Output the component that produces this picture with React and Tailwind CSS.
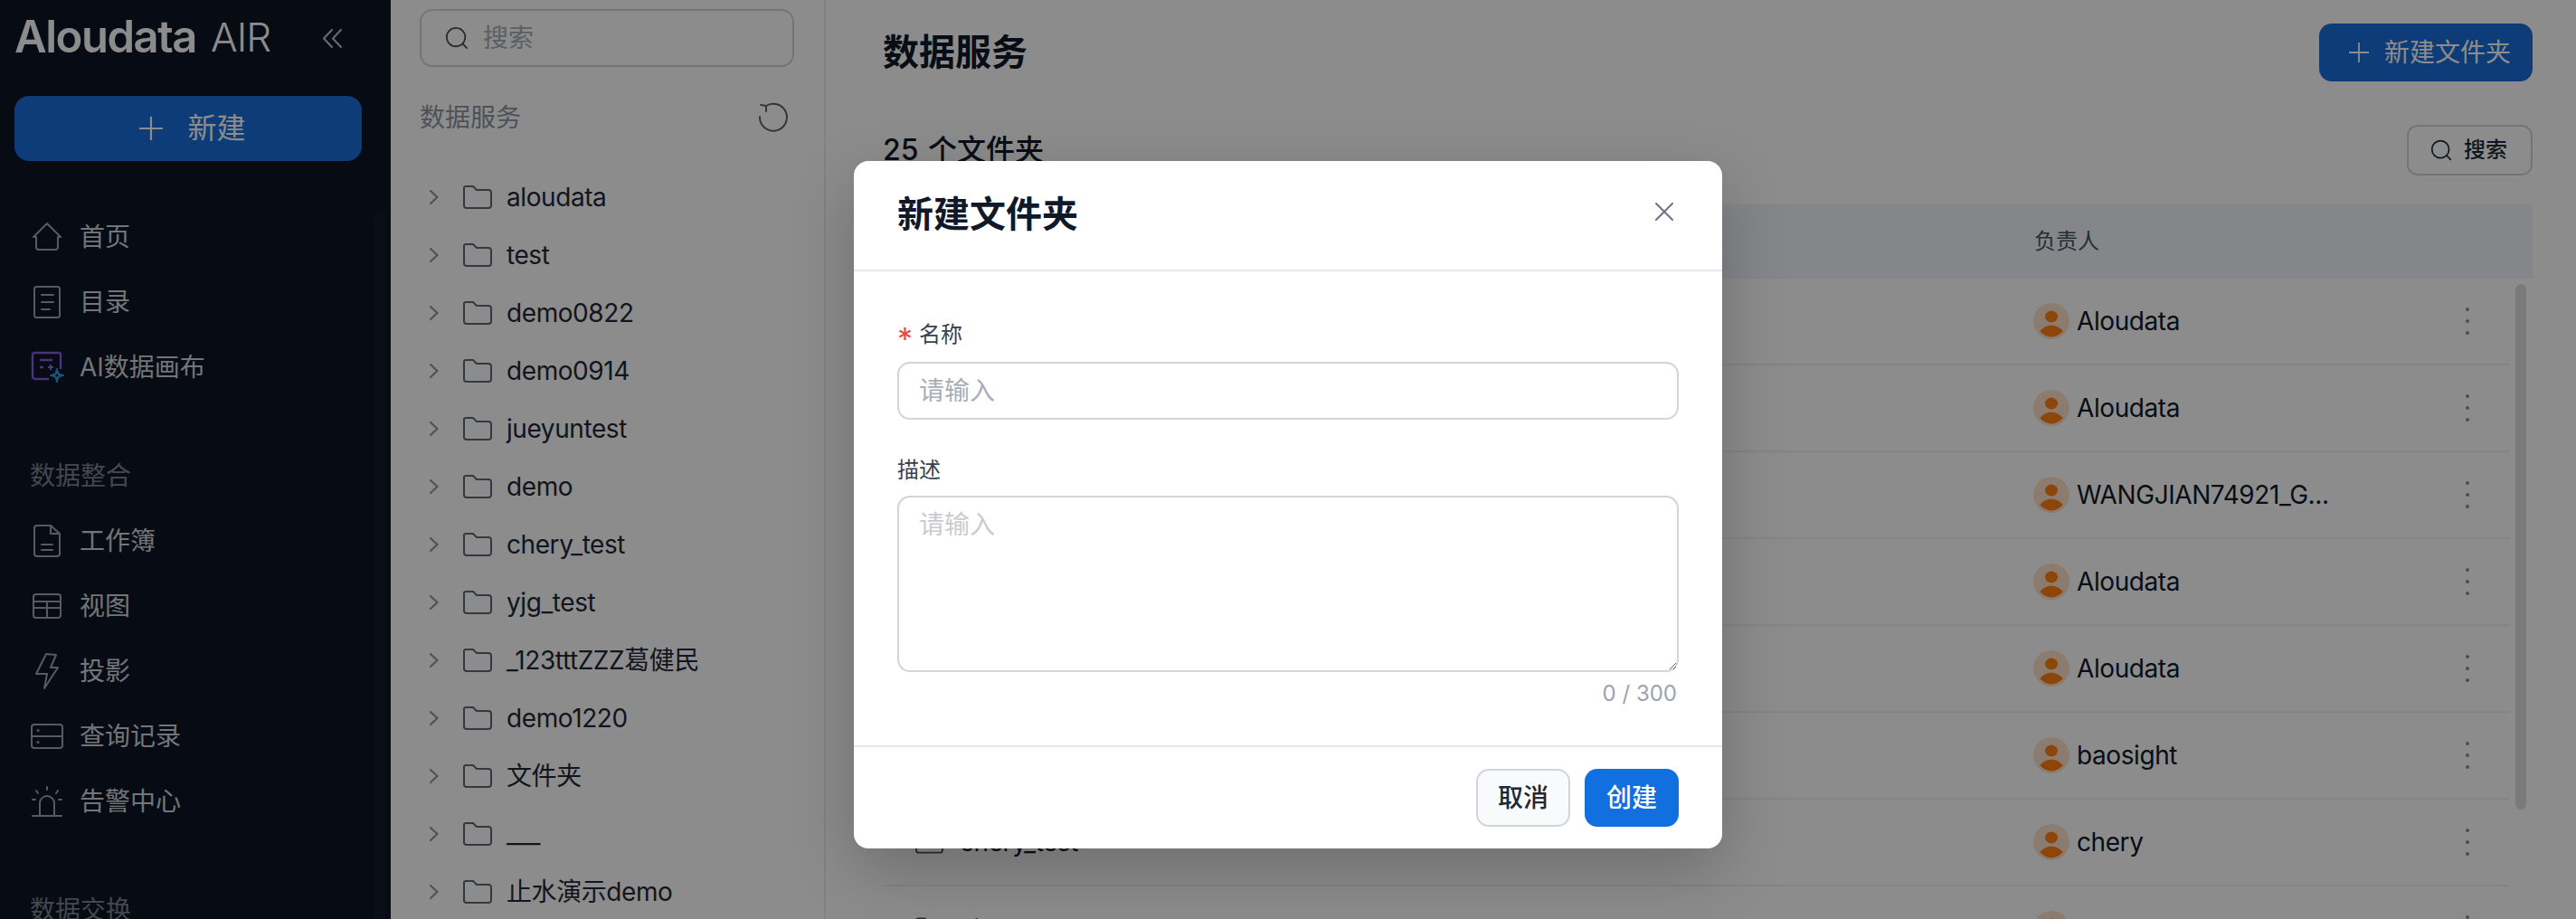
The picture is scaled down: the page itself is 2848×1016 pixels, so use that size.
import React from "react";

const Svg = ({ w, h, vb, children, className = "" }) => (
  <svg width={w} height={h} viewBox={vb || `0 0 ${w} ${h}`} fill="none" stroke="currentColor" strokeWidth="2" strokeLinecap="round" strokeLinejoin="round" className={"shrink-0 " + className}>
    {children}
  </svg>
);

const HomeIcon = () => (
  <Svg w={34} h={34}>
    <path d="M17 2 L32 17 H29 V28 a3 3 0 0 1 -3 3 H8 a3 3 0 0 1 -3 -3 V17 H2 Z" />
  </Svg>
);
const DirIcon = () => (
  <Svg w={32} h={38}>
    <rect x="2" y="2" width="28" height="34" rx="2.5" />
    <path d="M10 11 H23 M10 19 H23 M10 27 H19" />
  </Svg>
);
const AiIcon = () => (
  <svg width="38" height="36" viewBox="0 0 38 36" fill="none" className="shrink-0 translate-x-[1px]">
    <path d="M20 31 H5 a3 3 0 0 1 -3 -3 V4 a2 2 0 0 1 2 -2 H31 a2 2 0 0 1 2 2 V20" stroke="#8a5ce6" strokeWidth="2.4" />
    <path d="M10 10 H24 M10 18 H14" stroke="#8a5ce6" strokeWidth="2.4" />
    <path d="M19 18 H25 M22 15 V21" stroke="#7a70e0" strokeWidth="2" />
    <path d="M29 19 L31 25 L37 27 L31 29 L29 35 L27 29 L21 27 L27 25 Z" fill="#3198e6" stroke="#3198e6" strokeWidth="1" />
    <circle cx="29" cy="27" r="1.6" fill="#0e1625" />
  </svg>
);
const BookIcon = () => (
  <Svg w={32} h={38}>
    <path d="M5 2 H20 L30 11 V33 a3 3 0 0 1 -3 3 H5 a3 3 0 0 1 -3 -3 V5 a3 3 0 0 1 3 -3 Z" />
    <path d="M20 2 V11 H30 M10 23 H22 M10 29 H22" />
  </Svg>
);
const TableIcon = () => (
  <Svg w={34} h={30}>
    <rect x="2" y="2" width="30" height="26" rx="3" />
    <path d="M2 10 H32 M17 10 V28 M2 17 H32" />
  </Svg>
);
const BoltIcon = () => (
  <Svg w={28} h={42}>
    <path d="M13 2 L24 3 L18 17 L26 17 L11 40 L14 24 L2 24 Z" />
  </Svg>
);
const QueryIcon = () => (
  <Svg w={38} h={30}>
    <rect x="2" y="2" width="34" height="26" rx="3" />
    <path d="M2 15 H36" />
    <circle cx="9" cy="8.5" r="0.6" />
    <circle cx="9" cy="21.5" r="0.6" />
  </Svg>
);
const AlarmIcon = () => (
  <Svg w={36} h={36}>
    <path d="M2 34 H34 M10 34 V20 a8 8 0 0 1 16 0 V34" />
    <path d="M18 2 V5 M6 6 L8 9 M30 6 L28 9 M2 16 H5 M31 16 H34" />
  </Svg>
);
const SearchIcon = ({ s = 28 }) => (
  <svg width={s} height={s} viewBox="0 0 28 28" fill="none" stroke="currentColor" strokeWidth="2" strokeLinecap="round" className="shrink-0">
    <circle cx="13" cy="13" r="11" />
    <path d="M21 21 L26 26" />
  </svg>
);
const FolderIcon = ({ w = 32, h = 26 }) => (
  <svg width={w} height={h} viewBox="0 0 32 26" fill="none" stroke="currentColor" strokeWidth="2" strokeLinejoin="round" className="shrink-0">
    <path d="M1 3 a2 2 0 0 1 2 -2 H11 L15 5 H28 a3 3 0 0 1 3 3 V22 a3 3 0 0 1 -3 3 H4 a3 3 0 0 1 -3 -3 Z" />
  </svg>
);
const PlusIcon = ({ s }) => (
  <svg width={s} height={s} viewBox="0 0 24 24" fill="none" stroke="currentColor" strokeWidth="2" className="shrink-0">
    <path d="M12 0 V24 M0 12 H24" />
  </svg>
);
const Avatar = () => (
  <svg width="40" height="40" viewBox="0 0 40 40" className="shrink-0">
    <circle cx="20" cy="20" r="20" fill="#ffe2cc" />
    <ellipse cx="20" cy="15" rx="7" ry="6.5" fill="#ff8012" />
    <path d="M7 31 Q20 18 33 31 Q20 44 7 31 Z" fill="#ff8012" />
  </svg>
);
const Kebab = () => (
  <div className="w-[56px] flex flex-col items-center gap-[9px]">
    <span className="w-[4px] h-[4px] rounded-full bg-[#8a8f99]" />
    <span className="w-[4px] h-[4px] rounded-full bg-[#8a8f99]" />
    <span className="w-[4px] h-[4px] rounded-full bg-[#8a8f99]" />
  </div>
);

const NavItem = ({ icon, label }) => (
  <div className="h-[72px] flex items-center text-[28px] text-[#d1d5db]">
    <span className="w-[72px] flex justify-center text-[#a0a4ac] shrink-0">{icon}</span>
    <span>{label}</span>
  </div>
);

const SectionLabel = ({ children }) => (
  <div className="h-[72px] mt-[48px] pl-[17px] flex items-center text-[28px] text-[#7c818c]">{children}</div>
);

const Sidebar = () => (
  <aside className="relative w-[432px] shrink-0 bg-[#0e1625] pl-[16px] pr-[32px] overflow-hidden">
    <div className="h-[106px] flex items-start pt-[14px] text-white whitespace-nowrap">
      <span className="text-[49px] leading-[54px] font-semibold tracking-[-0.03em]">Aloudata</span>
      <span className="text-[44px] leading-[54px] font-light ml-[16px] tracking-[-0.02em]">AIR</span>
      <span className="ml-auto mr-[22px] mt-[18px] text-[#c0c4cc]">
        <Svg w={21} h={21} vb="0 0 21 21"><path d="M10 1 L1 10.5 L10 20 M20 1 L11 10.5 L20 20" /></Svg>
      </span>
    </div>
    <div className="h-[72px] rounded-[16px] bg-[#186dda] flex items-center justify-center gap-[27px] pl-[10px] text-white text-[32px]">
      <PlusIcon s={26} />
      <span>新建</span>
    </div>
    <div className="mt-[48px]">
      <NavItem icon={<HomeIcon />} label="首页" />
      <NavItem icon={<DirIcon />} label="目录" />
      <NavItem icon={<AiIcon />} label="AI数据画布" />
    </div>
    <SectionLabel>数据整合</SectionLabel>
    <NavItem icon={<BookIcon />} label="工作簿" />
    <NavItem icon={<TableIcon />} label="视图" />
    <NavItem icon={<BoltIcon />} label="投影" />
    <NavItem icon={<QueryIcon />} label="查询记录" />
    <NavItem icon={<AlarmIcon />} label="告警中心" />
    <SectionLabel>数据交换</SectionLabel>
    <div className="absolute right-[6px] top-[235px] bottom-0 w-[12px] bg-[#111a2a]" />
  </aside>
);

const treeItems = ["aloudata", "test", "demo0822", "demo0914", "jueyuntest", "demo", "chery_test", "yjg_test", "_123tttZZZ葛健民", "demo1220", "文件夹", "___", "止水演示demo"];

const Tree = () => (
  <section className="w-[481px] shrink-0 border-r-2 border-[#ededed] bg-white px-[32px] pt-[10px] overflow-hidden">
    <div className="h-[64px] w-[414px] rounded-[14px] border-2 border-[#d1d5db] flex items-center pl-[26px] gap-[16px] text-[28px] text-[#a8adb6]">
      <span className="text-[#4b5563]"><SearchIcon s={26} /></span>
      <span>搜索</span>
    </div>
    <div className="h-[64px] mt-[24px] flex items-center justify-between text-[28px] text-[#8f95a0] pr-[7px]">
      <span>数据服务</span>
      <span className="text-[#5b6472]">
        <Svg w={34} h={34}>
          <path d="M9 4 A15 15 0 1 1 2 16" />
          <path d="M3 3 L9 4 L9 10" />
        </Svg>
      </span>
    </div>
    <div className="mt-[24px]">
      {treeItems.map((name) => (
        <div key={name} className="h-[64px] flex items-center text-[28px] text-[#1f2937] whitespace-pre">
          <span className="w-[32px] flex justify-center text-[#8a909b]">
            <Svg w={10} h={16} vb="0 0 10 16"><path d="M1 1 L8.5 8 L1 15" /></Svg>
          </span>
          <span className="ml-[16px] mr-[16px] text-[#5f6776]"><FolderIcon /></span>
          <span className="tracking-[-0.015em]">{name}</span>
        </div>
      ))}
    </div>
  </section>
);

const rows = [
  ["aloudata", "Aloudata"],
  ["test", "Aloudata"],
  ["demo0822", "WANGJIAN74921_G..."],
  ["demo0914", "Aloudata"],
  ["jueyuntest", "Aloudata"],
  ["demo", "baosight"],
  ["chery_test", "chery"],
  ["yjg_test", "Aloudata"],
];

const Main = () => (
  <main className="flex-1 min-w-0 bg-white pl-[63px] pr-[48px] pt-[26px]">
    <div className="h-[64px] flex items-center justify-between">
      <h1 className="text-[40px] font-semibold text-[#111827]">数据服务</h1>
      <div className="w-[236px] h-[64px] rounded-[14px] bg-[#186dda] flex items-center pl-[33px] gap-[17px] text-[28px] text-white">
        <PlusIcon s={22} />
        <span>新建文件夹</span>
      </div>
    </div>
    <div className="h-[56px] mt-[48px] flex items-center justify-between">
      <span className="text-[32px] font-medium text-[#111827] [word-spacing:2px]">25 个文件夹</span>
      <div className="w-[139px] h-[56px] rounded-[12px] border-2 border-[#d1d5db] flex items-center pl-[24px] gap-[13px] text-[24px] font-medium text-[#1f2937]">
        <SearchIcon s={24} />
        <span>搜索</span>
      </div>
    </div>
    <div className="h-[82px] mt-[32px] bg-[#f2f5f9] flex items-center text-[24px] text-[#4b5563] pl-[1273px]">负责人</div>
    <div className="relative pr-[25px]">
      {rows.map(([name, owner]) => (
        <div key={name} className="h-[96px] border-b-2 border-[#f1f1f1] flex items-center text-[28px] text-[#111827]">
          <div className="flex-1 min-w-0 pl-[36px] flex items-center gap-[18px]">
            <span className="text-[#4b5563]"><FolderIcon w={31} h={28} /></span>
            <span className="tracking-[-0.015em]">{name}</span>
          </div>
          <div className="w-[452px] flex items-center gap-[8px]">
            <Avatar />
            <span className="tracking-[-0.015em]">{owner}</span>
          </div>
          <Kebab />
          <div className="w-[19px]" />
        </div>
      ))}
      <div className="absolute right-[7px] top-[6px] w-[12px] h-[581px] rounded-full bg-[#dfdfdf]" />
    </div>
  </main>
);

const Modal = () => (
  <div className="absolute left-[944px] top-[178px] w-[960px] h-[760px] bg-white rounded-[16px] shadow-[0_24px_70px_rgba(0,0,0,0.22)] flex flex-col">
    <div className="h-[122px] shrink-0 border-b-2 border-[#e5e7eb] pl-[48px] pr-[53px] flex items-center justify-between pb-[2px]">
      <h2 className="text-[40px] font-semibold text-[#111827]">新建文件夹</h2>
      <span className="text-[#6b7280] -mt-[6px]">
        <Svg w={22} h={22}><path d="M2 2 L20 20 M20 2 L2 20" /></Svg>
      </span>
    </div>
    <div className="flex-1 px-[48px] pt-[48px]">
      <div className="h-[44px] flex items-center text-[24px] text-[#374151]">
        <span className="text-[#f04848] w-[24px] text-[34px] leading-none pt-[10px]">*</span>
        <span>名称</span>
      </div>
      <input placeholder="请输入" className="mt-[8px] block w-full h-[64px] rounded-[14px] border-2 border-[#d1d5db] px-[22px] text-[28px] outline-none placeholder:text-[#a8adb8]" />
      <div className="h-[44px] mt-[34px] flex items-center text-[24px] text-[#374151]">描述</div>
      <textarea placeholder="请输入" className="mt-[6px] block w-full h-[195px] rounded-[14px] border-2 border-[#d1d5db] px-[22px] py-[8px] text-[28px] leading-[44px] outline-none resize-y placeholder:text-[#c9cbcf]" />
      <div className="h-[36px] mt-[6px] flex items-center justify-end pr-[2px] text-[24px] text-[#9ca3af]">0 / 300</div>
    </div>
    <div className="h-[114px] shrink-0 border-t-2 border-[#e5e7eb] px-[48px] flex items-center justify-end gap-[16px] text-[28px] font-medium">
      <div className="w-[104px] h-[64px] rounded-[14px] border-2 border-[#d1d5db] bg-[#f9fafb] text-[#1f2937] flex items-center justify-center">取消</div>
      <div className="w-[104px] h-[64px] rounded-[14px] bg-[#126fe0] text-white flex items-center justify-center">创建</div>
    </div>
  </div>
);

export default function App() {
  return (
    <div lang="zh-CN" className="relative w-[2848px] h-[1016px] overflow-hidden flex [font-family:Inter,'Noto_Sans_CJK_SC',sans-serif]">
      <Sidebar />
      <Tree />
      <Main />
      <div className="absolute inset-0 bg-black/45" />
      <Modal />
    </div>
  );
}
